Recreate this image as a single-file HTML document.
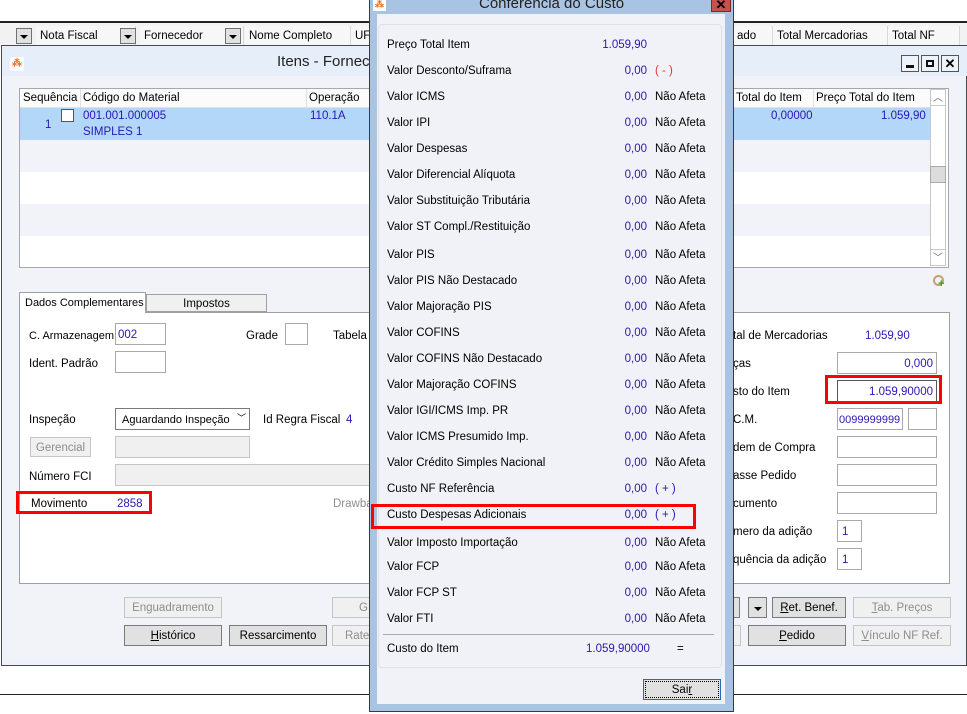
<!DOCTYPE html>
<html><head><meta charset="utf-8">
<style>
*{margin:0;padding:0;box-sizing:border-box}
body{width:967px;height:714px;overflow:hidden;background:#fff;font-family:"Liberation Sans",sans-serif;font-size:11.5px;line-height:17px;color:#000;position:relative}
.a{position:absolute;white-space:nowrap}
.blue{color:#2a16b4}
.inp{position:absolute;background:#fff;border:1px solid #a9a9a9;line-height:13px}
.btn{position:absolute;background:#e1e1e1;border:1px solid #7a7a7a;text-align:center;line-height:20px}
.dis{position:absolute;background:#f0f0f0;border:1px solid #c6c6c6;color:#8d8d8d;text-align:center;line-height:20px}
.dd{position:absolute;width:16px;height:16px;background:#e1e1e1;border:1px solid #707070}
.dd:after{content:"";position:absolute;left:3px;top:6px;border-left:4px solid transparent;border-right:4px solid transparent;border-top:4px solid #000}
.hc{position:absolute;top:26px;height:19px;background:#f7f7f7;border-right:1px solid #d8d8d8;line-height:21px;padding-left:4px}
</style></head><body>

<div class="a" style="left:0;top:21px;width:967px;height:2px;background:#222"></div>
<div class="a" style="left:0;top:23px;width:967px;height:24px;background:#f2f2f2"></div>
<div class="dd" style="left:16px;top:28px"></div>
<div class="hc" style="left:36px;width:100px">Nota Fiscal</div>
<div class="dd" style="left:120px;top:28px"></div>
<div class="hc" style="left:140px;width:104px">Fornecedor</div>
<div class="dd" style="left:225px;top:28px"></div>
<div class="hc" style="left:245px;width:106px">Nome Completo</div>
<div class="hc" style="left:351px;width:20px">UF</div>
<div class="hc" style="left:733px;width:40px">ado</div>
<div class="hc" style="left:773px;width:115px">Total Mercadorias</div>
<div class="hc" style="left:888px;width:72px">Total NF</div>
<div class="a" style="left:0;top:694px;width:967px;height:1px;background:#222"></div>

<div class="a" style="left:1px;top:45px;width:966px;height:621px;background:#eef2fa;border:1px solid #4a4a4a"></div>
<div class="a" style="left:2px;top:46px;width:965px;height:30px;background:#e6eefa"></div>
<div class="a" style="left:10px;top:57px;width:14px;height:14px;background:#fff;color:#f07020;font-size:10px;line-height:14px;text-align:center;font-weight:bold">⁂</div>
<div class="a" style="left:277px;top:53px;font-size:15px;color:#222">Itens - Fornecedor</div>
<div class="a" style="left:901px;top:55px;width:18px;height:17px;border:1px solid #555;background:#eef2fa"><div style="position:absolute;left:4px;top:9px;width:8px;height:3px;background:#111"></div></div>
<div class="a" style="left:921px;top:55px;width:18px;height:17px;border:1px solid #555;background:#eef2fa"><div style="position:absolute;left:4px;top:4px;width:8px;height:7px;border:2px solid #111"></div></div>
<div class="a" style="left:941px;top:55px;width:18px;height:17px;border:1px solid #555;background:#eef2fa;font-weight:bold;text-align:center;line-height:15px;font-size:13px">✕</div>
<div class="a" style="left:9px;top:76px;width:952px;height:582px;background:#f1f3f8"></div>

<div class="a" style="left:19px;top:88px;width:930px;height:180px;background:#fff;border:1px solid #a8a8a8"></div>
<div class="a" style="left:20px;top:89px;width:910px;height:19px;background:#fbfbfb;border-bottom:1px solid #e0e0e0"></div>
<div class="a" style="left:23px;top:90px">Sequência</div>
<div class="a" style="left:80px;top:89px;width:1px;height:19px;background:#e0e0e0"></div>
<div class="a" style="left:83px;top:90px">Código do Material</div>
<div class="a" style="left:306px;top:89px;width:1px;height:19px;background:#e0e0e0"></div>
<div class="a" style="left:309px;top:90px">Operação</div>
<div class="a" style="left:736px;top:90px">Total do Item</div>
<div class="a" style="left:813px;top:89px;width:1px;height:19px;background:#e0e0e0"></div>
<div class="a" style="left:816px;top:90px">Preço Total do Item</div>
<div class="a" style="left:20px;top:108px;width:910px;height:32px;background:#b3d7f8"></div>
<div class="a" style="left:20px;top:140px;width:910px;height:32px;background:#f1f3f8"></div>
<div class="a" style="left:20px;top:204px;width:910px;height:32px;background:#f1f3f8"></div>
<div class="a blue" style="left:45px;top:117px">1</div>
<div class="a" style="left:61px;top:109px;width:13px;height:13px;background:#fff;border:1px solid #555"></div>
<div class="a blue" style="left:83px;top:108px">001.001.000005</div>
<div class="a blue" style="left:83px;top:124px">SIMPLES 1</div>
<div class="a blue" style="left:310px;top:108px">110.1A</div>
<div class="a blue" style="left:771px;top:108px">0,00000</div>
<div class="a blue" style="left:881px;top:108px">1.059,90</div>
<div class="a" style="left:930px;top:89px;width:16px;height:177px;background:#fff;border:1px solid #c8c8c8"></div>
<div class="a" style="left:930px;top:89px;width:16px;height:17px;border:1px solid #c8c8c8;text-align:center;font-size:10px;color:#666">︿</div>
<div class="a" style="left:930px;top:166px;width:16px;height:17px;background:#dcdcdc;border:1px solid #aaa"></div>
<div class="a" style="left:930px;top:249px;width:16px;height:17px;border:1px solid #c8c8c8;text-align:center;font-size:10px;color:#666">﹀</div>
<div class="a" style="left:933px;top:275px;width:11px;height:11px;border:2px solid #c8a070;border-radius:50%"></div>
<div class="a" style="left:938px;top:276px;color:#2a2;font-weight:bold;font-size:11px">+</div>

<div class="a" style="left:19px;top:312px;width:931px;height:272px;background:#fff;border:1px solid #a0a0a0"></div>
<div class="a" style="left:19px;top:292px;width:127px;height:21px;background:#fff;border:1px solid #a0a0a0;border-bottom:none;padding:2px 0 0 5px;font-size:11px">Dados Complementares</div>
<div class="a" style="left:146px;top:294px;width:121px;height:18px;background:#f0f0f0;border:1px solid #a0a0a0;text-align:center;line-height:18px">Impostos</div>

<div class="a" style="left:29px;top:328px;font-size:11px">C. Armazenagem</div>
<div class="inp" style="left:115px;top:323px;width:51px;height:22px;padding:5px 2px;color:#2a16b4">002</div>
<div class="a" style="left:246px;top:328px">Grade</div>
<div class="inp" style="left:285px;top:323px;width:23px;height:22px"></div>
<div class="a" style="left:333px;top:328px">Tabela</div>
<div class="a" style="left:29px;top:356px">Ident. Padrão</div>
<div class="inp" style="left:115px;top:351px;width:51px;height:22px"></div>
<div class="a" style="left:29px;top:412px">Inspeção</div>
<div class="inp" style="left:115px;top:408px;width:135px;height:22px;border-color:#7a7a7a;padding:5px 6px;font-size:11px">Aguardando Inspeção<span style="position:absolute;right:3px;top:3px;font-size:9px">﹀</span></div>
<div class="a" style="left:263px;top:412px">Id Regra Fiscal</div>
<div class="a blue" style="left:346px;top:412px">4</div>
<div class="dis" style="left:30px;top:437px;width:61px;height:20px">Gerencial</div>
<div class="a" style="left:115px;top:436px;width:135px;height:22px;background:#f0f0f0;border:1px solid #c6c6c6"></div>
<div class="a" style="left:29px;top:469px">Número FCI</div>
<div class="a" style="left:115px;top:464px;width:260px;height:22px;background:#f0f0f0;border:1px solid #c6c6c6"></div>
<div class="a" style="left:16px;top:491px;width:136px;height:23px;border:3px solid #f00"></div>
<div class="a" style="left:31px;top:496px">Movimento</div>
<div class="a blue" style="left:117px;top:496px">2858</div>
<div class="a" style="left:333px;top:496px;color:#8d8d8d">Drawba</div>

<div class="a" style="left:733px;top:328px">tal de Mercadorias</div>
<div class="a blue" style="left:865px;top:328px">1.059,90</div>
<div class="a" style="left:733px;top:356px">ças</div>
<div class="inp" style="left:837px;top:352px;width:100px;height:22px;text-align:right;padding:5px 3px;color:#2a16b4">0,000</div>
<div class="a" style="left:733px;top:384px">sto do Item</div>
<div class="a" style="left:825px;top:375px;width:117px;height:29px;border:3px solid #f00"></div>
<div class="inp" style="left:837px;top:380px;width:100px;height:22px;text-align:right;padding:5px 3px;color:#2a16b4;border-color:#555">1.059,90000</div>
<div class="a" style="left:733px;top:412px">C.M.</div>
<div class="inp" style="left:837px;top:408px;width:66px;height:22px;padding:5px 1px;color:#2a16b4;font-size:11px">0099999999</div>
<div class="inp" style="left:908px;top:408px;width:29px;height:22px"></div>
<div class="a" style="left:733px;top:440px">dem de Compra</div>
<div class="inp" style="left:837px;top:436px;width:100px;height:22px"></div>
<div class="a" style="left:733px;top:468px">asse Pedido</div>
<div class="inp" style="left:837px;top:464px;width:100px;height:22px"></div>
<div class="a" style="left:733px;top:496px">cumento</div>
<div class="inp" style="left:837px;top:492px;width:100px;height:22px"></div>
<div class="a" style="left:733px;top:524px">mero da adição</div>
<div class="inp" style="left:837px;top:520px;width:25px;height:22px;padding:5px 4px;color:#2a16b4">1</div>
<div class="a" style="left:733px;top:552px">quência da adição</div>
<div class="inp" style="left:837px;top:548px;width:25px;height:22px;padding:5px 4px;color:#2a16b4">1</div>

<div class="dis" style="left:124px;top:597px;width:98px;height:21px">Enguadramento</div>
<div class="dis" style="left:332px;top:597px;width:40px;height:21px;text-align:left;padding-left:26px">G</div>
<div class="btn" style="left:124px;top:625px;width:98px;height:21px"><u>H</u>istórico</div>
<div class="btn" style="left:229px;top:625px;width:98px;height:21px">Ressarcimento</div>
<div class="dis" style="left:332px;top:625px;width:40px;height:21px;text-align:left;padding-left:12px">Rate</div>
<div class="btn" style="left:733px;top:597px;width:7px;height:21px;border-left:none"></div>
<div class="btn" style="left:748px;top:597px;width:19px;height:21px"><span style="position:absolute;left:5px;top:9px;border-left:4px solid transparent;border-right:4px solid transparent;border-top:4px solid #000"></span></div>
<div class="btn" style="left:772px;top:597px;width:74px;height:21px"><u>R</u>et. Benef.</div>
<div class="dis" style="left:853px;top:597px;width:98px;height:21px"><u>T</u>ab. Preços</div>
<div class="btn" style="left:733px;top:625px;width:8px;height:21px;border-left:none;background:#f0f0f0;border-color:#c6c6c6"></div>
<div class="btn" style="left:748px;top:625px;width:98px;height:21px"><u>P</u>edido</div>
<div class="dis" style="left:853px;top:625px;width:98px;height:21px"><u>V</u>ínculo NF Ref.</div>

<div class="a" style="left:369px;top:-10px;width:365px;height:722px;background:#a9c4e2;border:1px solid #3a3a3a"></div>
<div class="a" style="left:373px;top:-2px;width:13px;height:13px;background:#fff;color:#f07020;font-size:9px;line-height:13px;text-align:center;font-weight:bold">⁂</div>
<div class="a" style="left:479px;top:-5px;font-size:15px;color:#222">Conferência do Custo</div>
<div class="a" style="left:711px;top:-2px;width:20px;height:14px;background:#c75050;border:1px solid #7a2a2a;color:#000;font-weight:bold;text-align:center;line-height:12px;font-size:13px">✕</div>
<div class="a" style="left:377px;top:14px;width:348px;height:690px;background:#f0f2f7"></div>
<div class="a" style="left:378px;top:24px;width:344px;height:644px;border:1px solid #dde1ea;border-radius:4px"></div>

<div id="rows"></div>
<div class="a" style="left:371px;top:504px;width:325px;height:25px;border:3px solid #f00"></div>
<div class="a" style="left:383px;top:634px;width:331px;height:1px;background:#aaa"></div>
<div class="a" style="left:387px;top:641px">Custo do Item</div>
<div class="a blue" style="left:586px;top:641px">1.059,90000</div>
<div class="a" style="left:677px;top:641px">=</div>
<div class="a" style="left:643px;top:679px;width:78px;height:21px;background:#e1e1e1;border:1px solid #2a6ab4;outline:1px dotted #000;outline-offset:-3px;text-align:center;line-height:20px">Sai<u>r</u></div>

<script>
var r=[["Preço Total Item","1.059,90",""],["Valor Desconto/Suframa","0,00","(&nbsp;-&nbsp;)"],["Valor ICMS","0,00","Não Afeta"],["Valor IPI","0,00","Não Afeta"],["Valor Despesas","0,00","Não Afeta"],["Valor Diferencial Alíquota","0,00","Não Afeta"],["Valor Substituição Tributária","0,00","Não Afeta"],["Valor ST Compl./Restituição","0,00","Não Afeta"],["Valor PIS","0,00","Não Afeta"],["Valor PIS Não Destacado","0,00","Não Afeta"],["Valor Majoração PIS","0,00","Não Afeta"],["Valor COFINS","0,00","Não Afeta"],["Valor COFINS Não Destacado","0,00","Não Afeta"],["Valor Majoração COFINS","0,00","Não Afeta"],["Valor IGI/ICMS Imp. PR","0,00","Não Afeta"],["Valor ICMS Presumido Imp.","0,00","Não Afeta"],["Valor Crédito Simples Nacional","0,00","Não Afeta"],["Custo NF Referência","0,00","(&nbsp;+&nbsp;)"],["Custo Despesas Adicionais","0,00","(&nbsp;+&nbsp;)"],["Valor Imposto Importação","0,00","Não Afeta"],["Valor FCP","0,00","Não Afeta"],["Valor FCP ST","0,00","Não Afeta"],["Valor FTI","0,00","Não Afeta"]];
var ys=[45,71,97,123,149,175,201,227,255,281,307,333,359,385,411,437,463,489,515,543,567,593,619];
var h="";
r.forEach(function(x,i){var y=ys[i]-8;
h+='<div class="a" style="left:387px;top:'+y+'px">'+x[0]+'</div>';
h+='<div class="a blue" style="right:320px;top:'+y+'px">'+x[1]+'</div>';
var c=x[2].indexOf("-")>0?"#f03030":(x[2].indexOf("+")>0?"#2a16b4":"#000");
h+='<div class="a" style="left:655px;top:'+y+'px;color:'+c+'">'+x[2]+'</div>';});
document.getElementById("rows").innerHTML=h;
</script>
</body></html>
